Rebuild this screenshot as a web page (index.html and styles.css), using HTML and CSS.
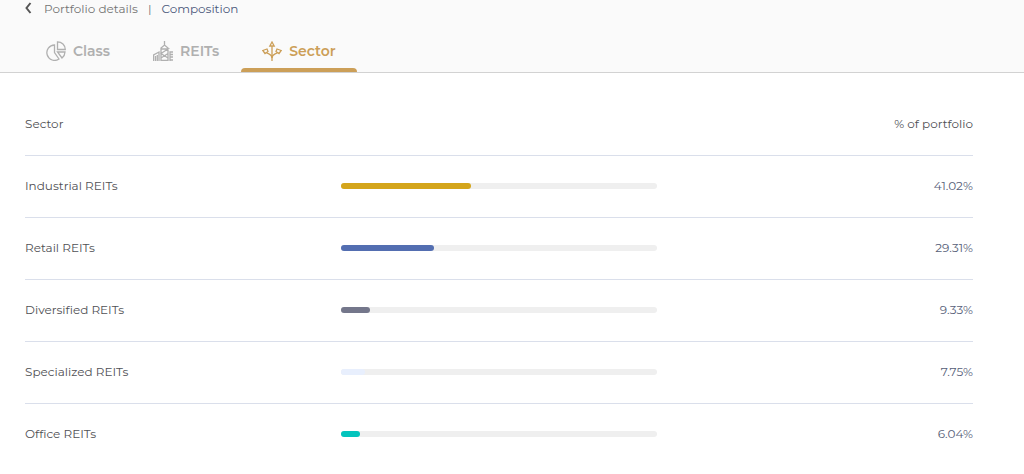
FILE: index.html
```html
<!DOCTYPE html>
<html lang="en">
<head>
    <meta charset="UTF-8">
    <meta name="viewport" content="width=device-width, initial-scale=1.0">
    <title>Portfolio Composition</title>
    <link rel="stylesheet" href="styles.css">
</head>
<body>
    <header class="header">
        <nav class="breadcrumb">
            <a href="#" class="back" aria-label="Back">
                <svg width="7" height="12" viewBox="0 0 7 12"><path d="M5.5 1 1.5 6l4 5"/></svg>
            </a>
            <a href="#" class="crumb">Portfolio details</a>
            <span class="divider">|</span>
            <span class="current">Composition</span>
        </nav>

        <div class="tabs" role="tablist">
            <button type="button" class="tab" role="tab">
                <svg class="icon" viewBox="0 0 20 20">
                    <path d="M8.500 4A7.700 7.700 0 1 0 13 18L8.500 11.500z"/>
                    <path d="M11.500 .8V8.500h7.800A7.800 7.800 0 0 0 11.500 .8z"/>
                    <path d="M11.500 11H19a8 8 0 0 1-3 6z"/>
                </svg>
                Class
            </button>
            <button type="button" class="tab" role="tab">
                <svg class="icon" viewBox="0 0 20 20">
                    <path d="M11.500 0v4M8 20V7l3.500-3L15 7v13M8 8h7l-7 4.500 7 4.500M8 17l7-4.500M8 19.500h7"/>
                    <path d="M.6 20v-6L6 11v9M2.500 20v-5M4.300 20v-6M17 20v-9h3M17 13.500h3M17 16h3M17 19h3"/>
                </svg>
                REITs
            </button>
            <button type="button" class="tab active" role="tab" aria-selected="true">
                <svg class="icon" viewBox="0 0 20 20">
                    <path d="M10 5v15M10 1 7.800 5h4.400z"/>
                    <path d="M10 17c0-4-3.500-3.500-5.500-5.500M10 17c0-4 3.500-3.500 5.500-5.500"/>
                    <path d="M.8 9.500 5 8l1 2.500-3 2zM19.200 9.500 15 8l-1 2.500 3 2z"/>
                </svg>
                Sector
            </button>
        </div>
    </header>

    <main class="content">
        <table class="sectors">
            <thead>
                <tr>
                    <th>Sector</th>
                    <th></th>
                    <th class="percent-title">% of portfolio</th>
                </tr>
            </thead>
            <tbody>
                <tr>
                    <td>Industrial REITs</td>
                    <td><div class="bar"><div class="fill gold" style="width: 41.02%"></div></div></td>
                    <td class="percent">41.02%</td>
                </tr>
                <tr>
                    <td>Retail REITs</td>
                    <td><div class="bar"><div class="fill blue" style="width: 29.31%"></div></div></td>
                    <td class="percent">29.31%</td>
                </tr>
                <tr>
                    <td>Diversified REITs</td>
                    <td><div class="bar"><div class="fill slate" style="width: 9.33%"></div></div></td>
                    <td class="percent">9.33%</td>
                </tr>
                <tr>
                    <td>Specialized REITs</td>
                    <td><div class="bar"><div class="fill pale" style="width: 7.75%"></div></div></td>
                    <td class="percent">7.75%</td>
                </tr>
                <tr>
                    <td>Office REITs</td>
                    <td><div class="bar"><div class="fill teal" style="width: 6.04%"></div></div></td>
                    <td class="percent">6.04%</td>
                </tr>
            </tbody>
        </table>
    </main>
</body>
</html>
```
FILE: styles.css
```css
body {
    margin: 0;
    background-color: #fff;
    font-family: Montserrat, Inter, sans-serif;
    font-size: 12px;
    line-height: 18px;
    font-variant-ligatures: none;
    color: #505054;
}

/* Header */
.header {
    background-color: #fafafa;
    border-bottom: 1px solid #d2d2d2;
}

.breadcrumb {
    display: flex;
    align-items: center;
    padding: 0 25px;
}

.breadcrumb a {
    color: #747474;
    text-decoration: none;
}

.back {
    display: flex;
    padding-bottom: 2px;
    margin-right: 12px;
}

.back svg {
    fill: none;
    stroke: #555;
    stroke-width: 2;
}

.divider {
    margin: 0 10px;
    color: #747474;
}

.current {
    color: #4b587a;
}

/* Tabs */
.tabs {
    display: flex;
    gap: 1px;
    padding: 12px 25px 0;
}

.tab {
    position: relative;
    display: flex;
    align-items: center;
    gap: 7px;
    padding: 11px 21px;
    border: none;
    background: none;
    font-family: inherit;
    font-size: 14px;
    font-weight: 600;
    line-height: 20px;
    color: #b0b0b0;
    cursor: pointer;
}

.tab.active {
    color: #cc9f58;
}

.tab.active::after {
    content: "";
    position: absolute;
    left: 0;
    right: 0;
    bottom: 0;
    height: 4px;
    border-radius: 4px 4px 0 0;
    background-color: #cc9f58;
}

.icon {
    width: 20px;
    height: 20px;
    fill: none;
    stroke: currentColor;
    stroke-width: 1.3;
}

/* Sector table */
.content {
    padding: 21px 51px 20px 25px;
}

.sectors {
    width: 100%;
    table-layout: fixed;
    border-collapse: separate;
    border-spacing: 0;
}

.sectors th,
.sectors td {
    padding: 21px 0 22px;
    border-bottom: 1px solid #dadfeb;
    font-weight: normal;
    text-align: left;
}

.sectors tbody tr:last-child td {
    border-bottom: none;
}

.sectors .percent-title,
.sectors .percent {
    text-align: right;
}

.sectors .percent {
    color: #565e78;
}

/* Bars */
.bar {
    height: 6px;
    border-radius: 3px;
    background-color: #efefef;
}

.fill {
    height: 100%;
    border-radius: 3px;
}

.gold {
    background-color: #d4a51b;
}

.blue {
    background-color: #536eb1;
}

.slate {
    background-color: #74778b;
}

.pale {
    background-color: #e8effd;
}

.teal {
    background-color: #03c4bd;
}
```
